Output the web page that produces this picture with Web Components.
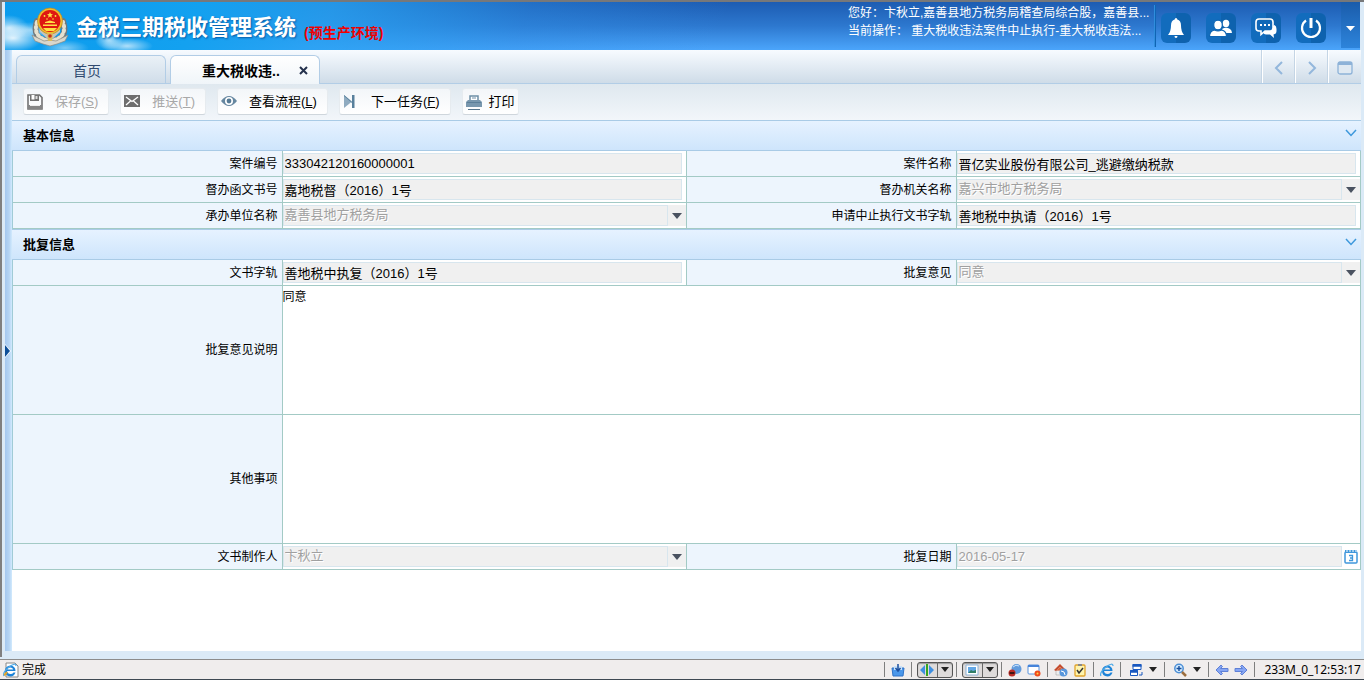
<!DOCTYPE html>
<html lang="zh-CN">
<head>
<meta charset="utf-8">
<title>金税三期税收管理系统</title>
<style>
  html, body { margin: 0; height: 100%; }
  body { font: 12px/18px "Liberation Sans", "Noto Sans CJK SC", sans-serif; color: #000; background: #dbeaf7; }
</style>
</head>
<body>
<tax-app></tax-app>

<script>
const define = (name, html, setup) => {
  const template = document.createElement('template');
  template.innerHTML = html;
  customElements.define(name, class extends HTMLElement {
    constructor() {
      super();
      this.attachShadow({ mode: 'open' }).append(template.content.cloneNode(true));
    }
    connectedCallback() {
      if (setup && !this.ready) { this.ready = true; setup(this, this.shadowRoot); }
    }
  });
};

const reset = `
  :host, *, *::before, *::after { box-sizing: border-box; }
  button { font: inherit; color: inherit; margin: 0; padding: 0; border: 0; background: none; }
  svg { display: block; }
`;

/* ---------- toolbar button ---------- */
const toolIcons = {
  save: '<path d="M1 1h11.500L15 3.500V15H1z" fill="none" stroke="#727272" stroke-width="1.600"/><path d="M3 1h9v6H3z" fill="#727272"/><path d="M4.500 1h3v4.500h-3z" fill="#fff"/><path d="M8.500 2h2v3h-2z" fill="#ddd"/><path d="M1 11h14v4H1z" fill="#858585"/><path d="M3 11.500h10" stroke="#eee"/>',
  send: '<path d="M0 1h16v12H0z" fill="#6e6e6e"/><path d="M2 3l6 4.500L14 3M2 11l4.500-4M14 11L9.500 7" fill="none" stroke="#fff" stroke-width="1.300"/>',
  eye: '<path d="M0 7Q8-3 16 7Q8 17 0 7z" fill="#6687a0"/><circle cx="8" cy="7" r="4" fill="#fff"/><circle cx="8" cy="7" r="2.400" fill="#557a95"/>',
  next: '<path d="M1 1v13l8-6.500z" fill="#8fabc0"/><path d="M1 1l8 7V1h2.500v13H9V9L1 2z" fill="#58809c"/>',
  print: '<path d="M4 6V2h8v4" fill="#fff" stroke="#6e8ea6" stroke-width="1.500"/><path d="M6 4h4" stroke="#6e8ea6"/><path d="M2 6h12l2 2v5H0V8z" fill="#7897ae"/><path d="M1 8.500h14" stroke="#5c7f99"/><path d="M2 15.500h12" stroke="#55758d"/>'
};
define('tool-button', `<style>${reset}
  :host { display: block; }
  button { display: flex; align-items: center; gap: 12px; height: 27px; padding: 0 10px 0 3px;
    font-size: 13px; line-height: 20px; border: 1px solid #e6ebef; border-bottom-color: #cfd6dc; border-radius: 3px;
    background: linear-gradient(#f3f6f9, #fff); }
  button:disabled { color: #a8a8a8; }
  :host([compact]) button { gap: 7px; padding-right: 3px; }
  svg { width: 16px; height: 16px; }
</style><button><svg viewBox="0 0 16 16"></svg><span><slot></slot></span></button>`, (host, root) => {
  root.querySelector('svg').innerHTML = toolIcons[host.getAttribute('icon')];
  root.querySelector('button').disabled = host.hasAttribute('disabled');
});

/* ---------- form ---------- */
define('form-section', `<style>${reset}
  :host { display: block; }
  header { display: flex; align-items: center; justify-content: space-between; height: 31px; padding: 0 4px 0 11px;
    border: 1px solid #a9cbe6; border-width: 1px 0; background: linear-gradient(#e6f2ff, #cee5fc); }
  h2 { margin: 0; font-size: 13px; line-height: 20px; font-weight: bold; }
  header button { padding-bottom: 4px; }
  header svg { width: 12px; height: 12px; }
  .grid { display: grid; grid-template-columns: 2fr 3fr 2fr 3fr; border-left: 1px solid #a0cbd6; }
</style>
<header><h2></h2><button aria-label="折叠"><svg viewBox="0 0 12 12"><path d="M1 2l5 5.500L11 2" fill="none" stroke="#3d98dc" stroke-width="1.500"/></svg></button></header>
<div class="grid"><slot></slot></div>`, (host, root) => {
  root.querySelector('h2').textContent = host.getAttribute('heading');
});

define('form-field', `<style>${reset}
  :host { display: grid; grid-column: span 2; grid-template-columns: subgrid; min-height: 26px; }
  :host([kind=area]) { grid-column: span 4; min-height: 129px; }
  label, .cell { border: 1px solid #a3cac5; border-width: 0 1px 1px 0; }
  label { display: flex; align-items: center; justify-content: flex-end; padding: 0 4px; background: #edf5fd; }
  .cell { display: flex; align-items: center; min-width: 0; padding-right: 4px; background: #fff; }
  :host([kind=area]) .cell { grid-column: 2 / -1; align-items: stretch; padding: 0; }
  :host([kind=select]) .cell, :host([kind=date]) .cell { padding: 0; }
  input, select, textarea { font: inherit; color: #000; margin: 0; border-radius: 0; appearance: none; flex: 1; min-width: 0; }
  input, select { height: 21px; padding: 0 2px 1px 1px; font-size: 13px; line-height: 18px; border: 1px solid #d8e6ee; background: #f0f0f0; }
  input:disabled, select:disabled { color: #a0a0a0; opacity: 1; text-shadow: 1px 1px #fff; }
  textarea { border: 0; padding: 2px 0; resize: none; background: #fff; font-size: 12px; line-height: 18px; }
  .arrow { width: 18px; height: 21px; display: grid; place-items: center; background: #f0f0f0; }
  .arrow svg { width: 10px; height: 6px; }
  .date { width: 18px; height: 21px; display: grid; place-items: center; }
  .date svg { width: 14px; height: 16px; }
</style><label for="c"></label><div class="cell"></div>`, (host, root) => {
  const kind = host.getAttribute('kind') || 'text';
  const value = host.getAttribute('value') || '';
  root.querySelector('label').textContent = host.getAttribute('label');
  root.querySelector('.cell').innerHTML = {
    text: `<input id="c" readonly value="${value}">`,
    select: `<select id="c" disabled><option>${value}</option></select><span class="arrow"><svg viewBox="0 0 10 6"><path d="M0 0h10L5 6z" fill="#4a5260"/></svg></span>`,
    area: `<textarea id="c">${value}</textarea>`,
    date: `<input id="c" disabled value="${value}"><button class="date" aria-label="选择日期"><svg viewBox="0 0 14 16"><rect x="1" y="3" width="12" height="11" rx="1" fill="#fff" stroke="#3f97dc" stroke-width="1.500"/><path d="M1 2.500h12" stroke="#3f97dc" stroke-width="3"/><path d="M3 1v2M6 1v2M9 1v2M12 1v2" stroke="#fff"/><path d="M5 6.500h3.500v5H5M6 9h2" fill="none" stroke="#3f97dc" stroke-width="1.300"/></svg></button>`
  }[kind];
});

/* ---------- top banner ---------- */
define('app-banner', `<style>${reset}
  :host { display: flex; align-items: center; height: 48px; color: #fff;
    background:
      radial-gradient(ellipse 20px 13px at 4px 26px, #fffb, #fff0),
      radial-gradient(ellipse 30px 14px at 8px 36px, #fffd, #fff0),
      radial-gradient(ellipse 28px 8px at 26px 28px, #fff8, #fff0),
      radial-gradient(ellipse 14px 10px at 104px 38px, #fffa, #fff0),
      radial-gradient(ellipse 26px 8px at 122px 44px, #fffa, #fff0),
      radial-gradient(ellipse 24px 8px at 60px 46px, #fff7, #fff0),
      linear-gradient(115deg, #0a9bec 0, #13a1f0 180px, #27a3f3cc 300px, #2b93ea55 480px, #2b93ea00 660px),
      linear-gradient(#1d5cb2, #2d78cf 50%, #4ba5fb); }
  .logo { width: 38px; height: 40px; margin: 2px 0 0 26px; }
  h1 { margin: 4px 0 0 7px; font-size: 22px; line-height: 32px; font-weight: bold; text-shadow: 1px 1px 2px #0559a5; white-space: nowrap; }
  .env { margin: 14px 0 0 8px; color: #f00000; font-size: 14px; line-height: 18px; font-weight: bold; white-space: nowrap; }
  .info { margin-left: auto; width: 300px; height: 44px; white-space: nowrap; }
  .info p { margin: 0; line-height: 18px; }
  .icons { display: flex; align-items: center; gap: 15px; height: 42px; margin: 0 15px 0 7px; padding: 4px 0 0 5px; border-left: 1px solid #0f64b4; box-shadow: -1px 0 #2f8ddd; }
  .icons button { width: 30px; height: 30px; border-radius: 6px; background: linear-gradient(90deg, #126cbd 50%, #0e62ae 50%); display: grid; place-items: center; }
  .icons svg { width: 24px; height: 24px; }
  .more { width: 19px; height: 46px; align-self: flex-start; display: grid; place-items: center; background: linear-gradient(#1a5cab, #2d84db); }
  .more svg { width: 9px; height: 5px; margin-top: 6px; }
</style>
<svg class="logo" viewBox="0 0 38 40">
  <g fill="none" stroke-linecap="round"><path d="M6 14Q0 33 19 34Q38 33 32 14" stroke="#71797d" stroke-width="6"/>
  <path d="M6 15Q1 31 19 34Q37 31 32 15" stroke="#e6e1cf" stroke-width="4" stroke-dasharray="1.500 3"/></g>
  <path d="M1 28l12 6 6-1 6 1 12-6-3 6-8 3-7 2-7-2-8-3z" fill="#d9d7cc" stroke="#8b8a82" stroke-width=".700"/>
  <path d="M9 25l10 9 10-9v-6H9z" fill="#c4c4bd"/>
  <ellipse cx="19" cy="14" rx="12.500" ry="13" fill="#f1bf2c" stroke="#b8862a" stroke-width=".700"/>
  <ellipse cx="19" cy="14" rx="10.500" ry="11" fill="#df1712"/>
  <g fill="#ffdf43"><path d="M19 5l.900 2 2.100.200-1.600 1.400.500 2.100-1.900-1.100-1.900 1.100.500-2.100L16 7.200l2.100-.200z"/><circle cx="13.500" cy="9" r=".900"/><circle cx="24.500" cy="9" r=".900"/><circle cx="16" cy="12" r=".800"/><circle cx="22" cy="12" r=".800"/><path d="M14 15l5-1.500 5 1.500v1H14zM12 19v-1.500h14V19zM12 21h14l-3 3H15z"/></g>
  <path d="M16 26h6l-1 8h-4z" fill="#dcb95a"/><circle cx="19" cy="29" r="1.800" fill="#c92d1c"/>
</svg>
<h1>金税三期税收管理系统</h1><span class="env">(预生产环境)</span>
<div class="info"><p>您好：卞秋立,嘉善县地方税务局稽查局综合股，嘉善县...</p><p>当前操作： 重大税收违法案件中止执行-重大税收违法...</p></div>
<div class="icons">
  <button aria-label="提醒"><svg viewBox="0 0 24 24" fill="#fff"><path d="M12 2q1.300 0 1.300 1.500Q17 4.500 17 9.500q0 6 3 9.500H4q3-3.500 3-9.500 0-5 3.700-6Q10.700 2 12 2zM10.500 20h3q0 2-1.500 2t-1.500-2z"/></svg></button>
  <button aria-label="用户"><svg viewBox="0 0 24 24" fill="#fff"><ellipse cx="17" cy="7.500" rx="3.300" ry="3.700"/><path d="M13 13q4-2.500 8 0 2 1.500 2 4h-8z"/><g stroke="#0f66b4" stroke-width="1.200"><ellipse cx="9" cy="9" rx="4.300" ry="4.800"/><path d="M.500 20.500q0-5.500 5-6.500 3.500 2 7 0 5 1 5 6.500z"/></g></svg></button>
  <button aria-label="消息"><svg viewBox="0 0 24 24"><path d="M20.500 9q2 1 2 4v2q0 3-3 3.500l.500 3.500-4-3.500h-4q-2 0-3-2" fill="#fff"/><path d="M5 3h11q3 0 3 3v6q0 3-3 3h-5l-4 3.500V15H5q-3 0-3-3V6q0-3 3-3z" fill="#1068b7" stroke="#fff" stroke-width="1.600"/><path d="M6 9h2M10 9h2M14 9h2" stroke="#fff" stroke-width="2"/></svg></button>
  <button aria-label="退出"><svg viewBox="0 0 24 24" fill="none" stroke="#fff"><path d="M7 4.500a9 9 0 1 0 10 0" stroke-width="2.200"/><path d="M12 2v10" stroke-width="3"/></svg></button>
</div>
<button class="more" aria-label="更多"><svg viewBox="0 0 9 5"><path d="M0 0h9L4.500 5z" fill="#fff"/></svg></button>`);

/* ---------- tabs ---------- */
define('tab-strip', `<style>${reset}
  :host { display: flex; align-items: flex-end; gap: 4px; height: 34px; padding-left: 4px; border-bottom: 1px solid #b2cde6;
    background: linear-gradient(#f7fbff, #cfdce8); font-size: 14px; line-height: 20px; }
  .tab { display: flex; align-items: center; width: 150px; height: 28px; padding: 0 8px 0 16px; border: 1px solid #b2cde6; border-bottom: 0;
    border-radius: 6px 6px 0 0; background: linear-gradient(#eaf1f7, #d0dde9); color: #2f4a70; }
  .tab > button:first-child { flex: 1; height: 27px; padding-top: 2px; }
  .tab::after { content: ""; width: 16px; }
  .on { background: linear-gradient(#fff, #f0f5f9); color: #000; font-weight: bold; margin-bottom: -1px; height: 29px; }
  .on::after { display: none; }
  .x { width: 16px; height: 16px; display: grid; place-items: center; }
  .x svg { width: 9px; height: 9px; }
  nav { display: flex; align-self: stretch; margin-left: auto; }
  nav button { width: 33px; border-left: 1px solid #fff; box-shadow: -1px 0 #c4d5e5; display: grid; place-items: center; padding-top: 2px; }
  nav svg { width: 16px; height: 16px; }
</style>
<div class="tab"><button>首页</button></div>
<div class="tab on"><button>重大税收违..</button><button class="x" aria-label="关闭"><svg viewBox="0 0 9 9"><path d="M1 1l7 7M8 1L1 8" stroke="#25324d" stroke-width="2"/></svg></button></div>
<nav>
  <button aria-label="向左"><svg viewBox="0 0 16 16"><path d="M11 2L5 8l6 6" fill="none" stroke="#93b7dc" stroke-width="2"/></svg></button>
  <button aria-label="向右"><svg viewBox="0 0 16 16"><path d="M5 2l6 6-6 6" fill="none" stroke="#93b7dc" stroke-width="2"/></svg></button>
  <button aria-label="窗口"><svg viewBox="0 0 16 16"><rect x="1" y="2" width="14" height="12" rx="2" fill="#dfe9f2" stroke="#8db2d8" stroke-width="1.300"/><path d="M1 3.500h14" stroke="#8db2d8" stroke-width="3"/></svg></button>
</nav>`);

/* ---------- browser status bar ---------- */
const arrow = '<svg class="dd" viewBox="0 0 8 5"><path d="M0 0h8L4 5z" fill="#222"/></svg>';
const ie = '<path d="M12.500 8H4q.500 3 3.500 3 2 0 3-1.500h2Q11 13.500 7.500 13.500 2 13 2 8t5.500-5.500Q12.500 3 12.500 8zM4.200 6.500h6q-.500-2-3-2t-3 2z" fill="#1d83d8"/><path d="M1 13Q-1 10 6 4q7-5 7-1" fill="none" stroke="#4faae8" stroke-width="1.200"/>';
const ic = (body) => `<svg class="ic" viewBox="0 0 14 14">${body}</svg>`;
define('status-bar', `<style>${reset}
  :host { display: flex; align-items: center; height: 21px; border-top: 1px solid #8c8c8c; border-bottom: 1px solid #3e4852;
    background: #f0eded; }
  .ic { width: 14px; height: 14px; }
  .page { width: 16px; height: 16px; margin: 0 3px; }
  .right { display: flex; align-items: center; margin-left: auto; }
  .g { display: flex; align-items: center; gap: 5px; height: 15px; padding: 0 6px; border-left: 1px solid #7f7f7f; }
  .split { padding: 0 3px 0 5px; }
  .split button { display: flex; align-items: center; width: 36px; height: 16px; border: 1px solid #555; border-radius: 3px; background: #dedbdb; box-shadow: inset 0 1px 1px #999; }
  .split .ic { margin: 0 3px 0 2px; flex: none; }
  .split .dd { box-sizing: content-box; border-left: 1px solid #666; padding: 5px 3px; }
  .drop { padding: 0 7px 0 8px; gap: 6px; }
  .dd { width: 8px; height: 5px; }
  .time { font-family: "Noto Sans", "Noto Sans CJK SC", sans-serif; padding: 0 3px 0 9px; }
</style>
<svg class="page" viewBox="0 0 16 16"><path d="M3 1h9l3 3v11H3z" fill="#fff" stroke="#888"/><g transform="translate(0 1)">${ie}</g><path d="M1 13q2-1 3-3" stroke="#e4a52a" stroke-width="2" fill="none"/></svg>
<span>完成</span>
<div class="right">
  <span class="g">${ic('<path d="M1 5h12l-1 8H2z" fill="#4a97ea" stroke="#2f73c9"/><path d="M3 3h8v4H3z" fill="#c9e2fa"/><path d="M7 1v6M4.500 5L7 8l2.500-3" stroke="#1c4f9f" stroke-width="1.500" fill="none"/>')}</span>
  <span class="g split"><button aria-label="分栏">${ic('<path d="M0 7l5-5v10zM14 7L9 2v10z" fill="#3d8fe2"/><path d="M7 1v12" stroke="#36a51f" stroke-width="2"/>')}${arrow}</button></span>
  <span class="g split"><button aria-label="图片">${ic('<path d="M1 2h12v10H1z" fill="#fff" stroke="#8fb2d6"/><path d="M3 4h8v6H3z" fill="#63a7e6"/><path d="M3 10l3-3 2 1 3-1v3z" fill="#307e66"/>')}${arrow}</button></span>
  <span class="g">${ic('<circle cx="8.500" cy="6" r="5" fill="#619bdd"/><path d="M5 4q3-3 6-1" stroke="#cce4fb" fill="none"/><circle cx="4" cy="10" r="3.500" fill="#b92b25"/><path d="M1.500 10h5" stroke="#421514" stroke-width="2"/>')}${ic('<rect x="1" y="2" width="11" height="9" rx="1" fill="#fff" stroke="#5691dc"/><path d="M1 3h11" stroke="#4684da" stroke-width="2"/><circle cx="10.500" cy="10.500" r="3" fill="#ef4b1c"/><circle cx="10.500" cy="10.500" r="1" fill="#ffd44a"/>')}</span>
  <span class="g">${ic('<path d="M2 7h8v5H2z" fill="#eee" stroke="#999" stroke-width=".500"/><path d="M0 7l6-6 6 6-2 1-4-4-4 4z" fill="#c44b2d"/><path d="M6 4l3.500 3.500h-7z" fill="#d8603a"/><circle cx="9.500" cy="9.500" r="4" fill="#5997dc"/><path d="M7 8l3 1 1 3" stroke="#fff" fill="none"/>')}${ic('<rect x="2" y="2" width="10" height="11" rx="1" fill="#fff4ad" stroke="#e0a32c" stroke-width="1.300"/><path d="M5 1h4v2H5z" fill="#888"/><path d="M4 7l2 3 4-5" stroke="#333" stroke-width="1.500" fill="none"/>')}</span>
  <span class="g">${ic(ie)}</span>
  <span class="g drop">${ic('<path d="M4 1.500h8v5H4zM1.500 7.500h7v5h-7z" fill="#fff" stroke="#1958c0"/><path d="M3.500 2.500h9M1 8.500h8" stroke="#1958c0" stroke-width="2.500"/><path d="M10 12h3V9" stroke="#1958c0" fill="none"/>')}${arrow}</span>
  <span class="g drop">${ic('<circle cx="6" cy="5.500" r="4.200" fill="#d7edff" stroke="#4c8fd6" stroke-width="1.500"/><path d="M3.500 5.500h5M6 3v5" stroke="#174d9a" stroke-width="1.400"/><path d="M9 9l4 4" stroke="#9b6d3f" stroke-width="2.500"/>')}${arrow}</span>
  <span class="g">${ic('<path d="M1 7l5-5 1.500 1.500L5.500 5.500H13v3H5.500l2 2L6 12z" fill="#86a6f4" stroke="#5f80d6"/>')}${ic('<path d="M13 7L8 2 6.500 3.500l2 2H1v3h7.500l-2 2L8 12z" fill="#86a6f4" stroke="#5f80d6"/>')}</span>
  <span class="g time">233M_0_12:53:17</span>
</div>`);

/* ---------- page ---------- */
define('tax-app', `<style>${reset}
  :host { display: flex; flex-direction: column; min-height: 100vh; border-top: 2px solid #77787a; }
  .frame { flex: 1; display: flex; flex-direction: column; padding: 0 3px 6px 3px; margin-bottom: 2px; border-left: 2px solid #808080; }
  app-banner { margin-right: 1px; }
  .body { flex: 1; display: flex; }
  .side { width: 7px; display: flex; align-items: center; background: linear-gradient(90deg, #a5c8ef, #b6d5f4 60%, #d2eafd); }
  .side svg { width: 6px; height: 14px; }
  main { flex: 1; min-width: 0; background: #fff; }
  .tools { display: flex; gap: 11px; height: 36px; padding: 4px 11px; background: linear-gradient(#dfe8ef, #f2f6fa); }
</style>
<div class="frame">
  <app-banner></app-banner>
  <div class="body">
    <div class="side"><button aria-label="展开菜单"><svg viewBox="0 0 6 14"><path d="M0 0l6 7-6 7z" fill="#fff"/><path d="M0 1l5 6-5 6z" fill="#0d4f99"/></svg></button></div>
    <main>
      <tab-strip></tab-strip>
      <div class="tools">
        <tool-button icon="save" disabled>保存(<u>S</u>)</tool-button>
        <tool-button icon="send" disabled>推送(<u>T</u>)</tool-button>
        <tool-button icon="eye">查看流程(<u>L</u>)</tool-button>
        <tool-button icon="next">下一任务(<u>F</u>)</tool-button>
        <tool-button icon="print" compact>打印</tool-button>
      </div>
      <form-section heading="基本信息">
        <form-field label="案件编号" value="333042120160000001"></form-field>
        <form-field label="案件名称" value="晋亿实业股份有限公司_逃避缴纳税款"></form-field>
        <form-field label="督办函文书号" value="嘉地税督（2016）1号"></form-field>
        <form-field label="督办机关名称" kind="select" value="嘉兴市地方税务局"></form-field>
        <form-field label="承办单位名称" kind="select" value="嘉善县地方税务局"></form-field>
        <form-field label="申请中止执行文书字轨" value="善地税中执请（2016）1号"></form-field>
      </form-section>
      <form-section heading="批复信息">
        <form-field label="文书字轨" value="善地税中执复（2016）1号"></form-field>
        <form-field label="批复意见" kind="select" value="同意"></form-field>
        <form-field label="批复意见说明" kind="area" value="同意"></form-field>
        <form-field label="其他事项" kind="area"></form-field>
        <form-field label="文书制作人" kind="select" value="卞秋立"></form-field>
        <form-field label="批复日期" kind="date" value="2016-05-17"></form-field>
      </form-section>
    </main>
  </div>
</div>
<status-bar></status-bar>`);
</script>
</body>
</html>
